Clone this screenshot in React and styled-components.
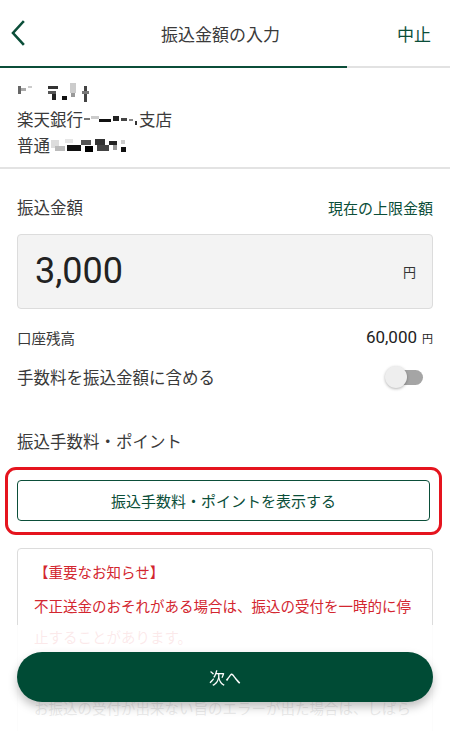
import React from "react";
import styled, { createGlobalStyle } from "styled-components";

const GREEN = "#0b4e39";
const TEXT = "#333";
const RED = "#d3262f";

const GlobalStyle = createGlobalStyle`
  html, body {
    margin: 0;
    padding: 0;
    background: #fff;
  }
  body {
    font-family: Roboto, "Noto Sans CJK JP", sans-serif;
    color: ${TEXT};
  }
`;

// pixelated (hidden) name / branch / account number
const nameBlocks = [
  [0, 4, 3, 8, "#666"], [3, 6, 5, 3, "#aaa"], [10, 4, 4, 2, "#ccc"],
  [30, 4, 10, 3, "#333"], [30, 9, 8, 3, "#555"], [34, 12, 4, 6, "#222"],
  [44, 14, 5, 4, "#111"], [52, 1, 6, 10, "#ccc"], [53, 11, 4, 4, "#999"],
  [66, 4, 3, 16, "#444"], [64, 9, 7, 3, "#777"],
];
const branchBlocks = [
  [0, 10, 6, 2, "#777"], [7, 8, 8, 3, "#ccc"], [15, 11, 12, 3, "#111"],
  [29, 8, 6, 5, "#222"], [37, 10, 6, 3, "#444"], [45, 11, 4, 2, "#888"],
  [51, 13, 2, 4, "#333"],
];
const numberBlocks = [
  [0, 6, 8, 8, "#ddd"], [4, 12, 10, 5, "#bbb"], [14, 5, 8, 4, "#e6e6e6"],
  [16, 11, 14, 6, "#111"], [30, 6, 10, 5, "#555"], [34, 12, 8, 6, "#000"],
  [44, 5, 10, 6, "#333"], [46, 11, 12, 6, "#444"], [58, 7, 8, 4, "#222"],
  [62, 11, 4, 5, "#999"], [70, 6, 4, 4, "#ccc"], [70, 13, 5, 5, "#111"],
];

const Mosaic = ({ blocks, width }) => (
  <MosaicSvg width={width} height={22} viewBox={`0 0 ${width} 22`}>
    {blocks.map(([x, y, w, h, c], i) => (
      <rect key={i} x={x} y={y} width={w} height={h} fill={c} />
    ))}
  </MosaicSvg>
);

const App = () => {
  return (
    <>
      <GlobalStyle />
      <Page>
        <Header>
          <BackButton aria-label="戻る">
            <svg width="16" height="26" viewBox="0 0 16 26">
              <path d="M13 2 L3 13 L13 24" fill="none" stroke={GREEN} strokeWidth="2.6" strokeLinecap="square" />
            </svg>
          </BackButton>
          <HeaderTitle>振込金額の入力</HeaderTitle>
          <CancelLink>中止</CancelLink>
        </Header>
        <Progress>
          <ProgressFill style={{ width: `${(347 / 450) * 100}%` }} />
        </Progress>

        <Recipient>
          <RecipientLine>
            <Mosaic blocks={nameBlocks} width={72} />
          </RecipientLine>
          <RecipientLine>
            楽天銀行
            <Mosaic blocks={branchBlocks} width={54} />
            支店
          </RecipientLine>
          <RecipientLine>
            普通
            <Mosaic blocks={numberBlocks} width={76} />
          </RecipientLine>
        </Recipient>

        <Content>
          <Row>
            <Label>振込金額</Label>
            <LinkText>現在の上限金額</LinkText>
          </Row>
          <AmountBox>
            <AmountValue>3,000</AmountValue>
            <Yen>円</Yen>
          </AmountBox>

          <Row $top={16}>
            <SmallLabel>口座残高</SmallLabel>
            <Balance>
              60,000<BalanceYen>円</BalanceYen>
            </Balance>
          </Row>

          <Row $top={16}>
            <Label>手数料を振込金額に含める</Label>
            <Toggle>
              <ToggleTrack />
              <ToggleKnob />
            </Toggle>
          </Row>

          <Row $top={40}>
            <Label>振込手数料・ポイント</Label>
          </Row>

          <Highlight>
            <OutlineButton>振込手数料・ポイントを表示する</OutlineButton>
          </Highlight>

          <Notice>
            <NoticeTitle>【重要なお知らせ】</NoticeTitle>
            <NoticeText $color={RED}>
              不正送金のおそれがある場合は、振込の受付を一時的に停止することがあります。
            </NoticeText>
            <NoticeText $color={TEXT} $gap>
              お振込の受付が出来ない旨のエラーが出た場合は、しばらく時間をおいてから再度お試しください。
            </NoticeText>
          </Notice>
        </Content>
      </Page>

      <Footer>
        <PrimaryButton>次へ</PrimaryButton>
      </Footer>
    </>
  );
};

export default App;

const Page = styled.div`
  width: 100%;
  padding-bottom: 140px;
`;

const Header = styled.header`
  height: 66px;
  display: flex;
  align-items: center;
  justify-content: space-between;
  padding: 0 19px 0 10px;
  box-sizing: border-box;
`;

const BackButton = styled.button`
  border: none;
  background: none;
  padding: 0;
  width: 60px;
  display: flex;
  align-items: center;
  cursor: pointer;
`;

const HeaderTitle = styled.h1`
  margin: 0;
  font-size: 17px;
  font-weight: 400;
  color: #3a3a3a;
  font-family: "Noto Sans CJK JP", sans-serif;
`;

const CancelLink = styled.span`
  width: 60px;
  text-align: right;
  font-size: 17px;
  color: ${GREEN};
  font-family: "Noto Sans CJK JP", sans-serif;
`;

const Progress = styled.div`
  height: 2px;
  background: #e2e2e2;
`;

const ProgressFill = styled.div`
  height: 100%;
  background: ${GREEN};
`;

const Recipient = styled.section`
  padding: 12px 17px 9px;
  border-bottom: 2px solid #e3e3e3;
`;

const RecipientLine = styled.div`
  display: flex;
  align-items: center;
  height: 26px;
  font-size: 16.5px;
  color: #3a3a3a;
  font-family: "Noto Sans CJK JP", sans-serif;
`;

const MosaicSvg = styled.svg`
  display: block;
  margin: 0 1px;
`;

const Content = styled.main`
  padding: 26px 17px 0;
`;

const Row = styled.div`
  display: flex;
  align-items: center;
  justify-content: space-between;
  height: 24px;
  margin-top: ${(p) => p.$top || 0}px;
`;

const Label = styled.span`
  font-size: 16.5px;
  color: #3a3a3a;
  font-family: "Noto Sans CJK JP", sans-serif;
`;

const SmallLabel = styled.span`
  font-size: 14.5px;
  color: #3a3a3a;
  font-family: "Noto Sans CJK JP", sans-serif;
`;

const LinkText = styled.span`
  font-size: 15px;
  color: ${GREEN};
  font-family: "Noto Sans CJK JP", sans-serif;
`;

const AmountBox = styled.div`
  margin-top: 15px;
  height: 75px;
  box-sizing: border-box;
  background: #f3f3f3;
  border: 1px solid #dcdcdc;
  border-radius: 4px;
  display: flex;
  align-items: center;
  justify-content: space-between;
  padding: 0 16px 0 17px;
`;

const AmountValue = styled.span`
  font-family: Roboto, sans-serif;
  font-size: 36px;
  color: #222;
  padding-bottom: 2px;
`;

const Yen = styled.span`
  font-size: 13px;
  color: #333;
  font-family: "Noto Sans CJK JP", sans-serif;
`;

const Balance = styled.span`
  font-family: Roboto, sans-serif;
  font-size: 17px;
  color: #222;
  display: flex;
  align-items: baseline;
`;

const BalanceYen = styled.span`
  font-size: 11px;
  margin-left: 5px;
  font-family: "Noto Sans CJK JP", sans-serif;
`;

const Toggle = styled.div`
  position: relative;
  width: 38px;
  height: 22px;
  margin-right: 10px;
`;

const ToggleTrack = styled.div`
  position: absolute;
  left: 3px;
  right: 0;
  top: 4px;
  height: 15px;
  border-radius: 8px;
  background: #a5a5a5;
`;

const ToggleKnob = styled.div`
  position: absolute;
  left: 0;
  top: 0;
  width: 22px;
  height: 22px;
  border-radius: 50%;
  background: #eeeeee;
  box-shadow: 0 1px 3px rgba(0, 0, 0, 0.3);
`;

const Highlight = styled.div`
  margin: 14px -9px 0 -12px;
  padding: 10px 9px 11px 9px;
  border: 3px solid #e5141e;
  border-radius: 11px;
`;

const OutlineButton = styled.button`
  width: 100%;
  height: 41px;
  border: 1px solid ${GREEN};
  border-radius: 4px;
  background: #fff;
  color: ${GREEN};
  font-size: 15px;
  font-family: "Noto Sans CJK JP", sans-serif;
  cursor: pointer;
`;

const Notice = styled.div`
  margin-top: 13px;
  border: 1px solid #dcdcdc;
  border-radius: 4px;
  padding: 11px 16px 20px;
`;

const NoticeTitle = styled.div`
  font-size: 14.5px;
  line-height: 24px;
  color: ${RED};
  font-family: "Noto Sans CJK JP", sans-serif;
`;

const NoticeText = styled.p`
  margin: ${(p) => (p.$gap ? "40px" : "6px")} 0 0;
  font-size: 14.5px;
  line-height: 31px;
  color: ${(p) => p.$color};
  font-family: "Noto Sans CJK JP", sans-serif;
`;

const Footer = styled.footer`
  position: fixed;
  left: 0;
  right: 0;
  bottom: 0;
  padding: 27px 17px 29px 17px;
  background: rgba(255, 255, 255, 0.9);
`;

const PrimaryButton = styled.button`
  width: 100%;
  height: 50px;
  border: none;
  border-radius: 25px;
  background: #004b35;
  color: #fff;
  font-size: 16px;
  font-family: "Noto Sans CJK JP", sans-serif;
  box-shadow: 0 5px 10px rgba(0, 0, 0, 0.25);
  cursor: pointer;
`;
